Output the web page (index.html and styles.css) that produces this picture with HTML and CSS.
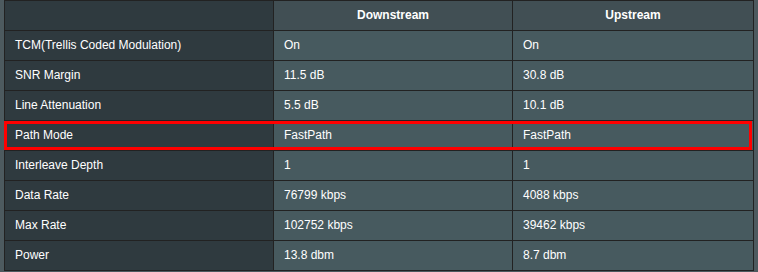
FILE: index.html
```html
<!DOCTYPE html>
<html>
<head>
<meta charset="utf-8">
<link rel="stylesheet" href="styles.css">
</head>
<body>
<div class="wrap">
<table class="stats">
<colgroup><col class="c1"><col class="c2"><col class="c3"></colgroup>
<thead>
<tr><th class="label"></th><th class="head">Downstream</th><th class="head">Upstream</th></tr>
</thead>
<tbody>
<tr><th class="label">TCM(Trellis Coded Modulation)</th><td>On</td><td>On</td></tr>
<tr><th class="label">SNR Margin</th><td>11.5 dB</td><td>30.8 dB</td></tr>
<tr><th class="label">Line Attenuation</th><td>5.5 dB</td><td>10.1 dB</td></tr>
<tr><th class="label">Path Mode</th><td>FastPath</td><td>FastPath</td></tr>
<tr><th class="label">Interleave Depth</th><td>1</td><td>1</td></tr>
<tr><th class="label">Data Rate</th><td>76799 kbps</td><td>4088 kbps</td></tr>
<tr><th class="label">Max Rate</th><td>102752 kbps</td><td>39462 kbps</td></tr>
<tr><th class="label">Power</th><td>13.8 dbm</td><td>8.7 dbm</td></tr>
</tbody>
</table>
<div class="highlight"></div>
</div>
</body>
</html>
```
FILE: styles.css
```css
html, body {
  margin: 0;
  padding: 0;
  background: #4d5a5f;
}
.wrap {
  position: relative;
  margin-left: 4px;
  width: 749px;
}
.stats {
  border-collapse: collapse;
  table-layout: fixed;
  width: 749px;
  font-family: "Liberation Sans", Arial, sans-serif;
  font-size: 12px;
  color: #ffffff;
}
.c1 { width: 269px; }
.c2 { width: 239px; }
.c3 { width: 241px; }
.stats th, .stats td {
  border: 1px solid #222222;
  padding: 0 10px;
  line-height: 29px;
  height: 29px;
  text-align: left;
  white-space: nowrap;
}
.stats th.label {
  background: #2f3a3f;
  font-weight: normal;
}
.stats th.head {
  background: #414f54;
  font-weight: bold;
  text-align: center;
}
.stats td {
  background: #475a5f;
}
.highlight {
  position: absolute;
  left: 0;
  top: 121px;
  width: 742px;
  height: 23px;
  border: 3px solid #ff0000;
  pointer-events: none;
}
```
